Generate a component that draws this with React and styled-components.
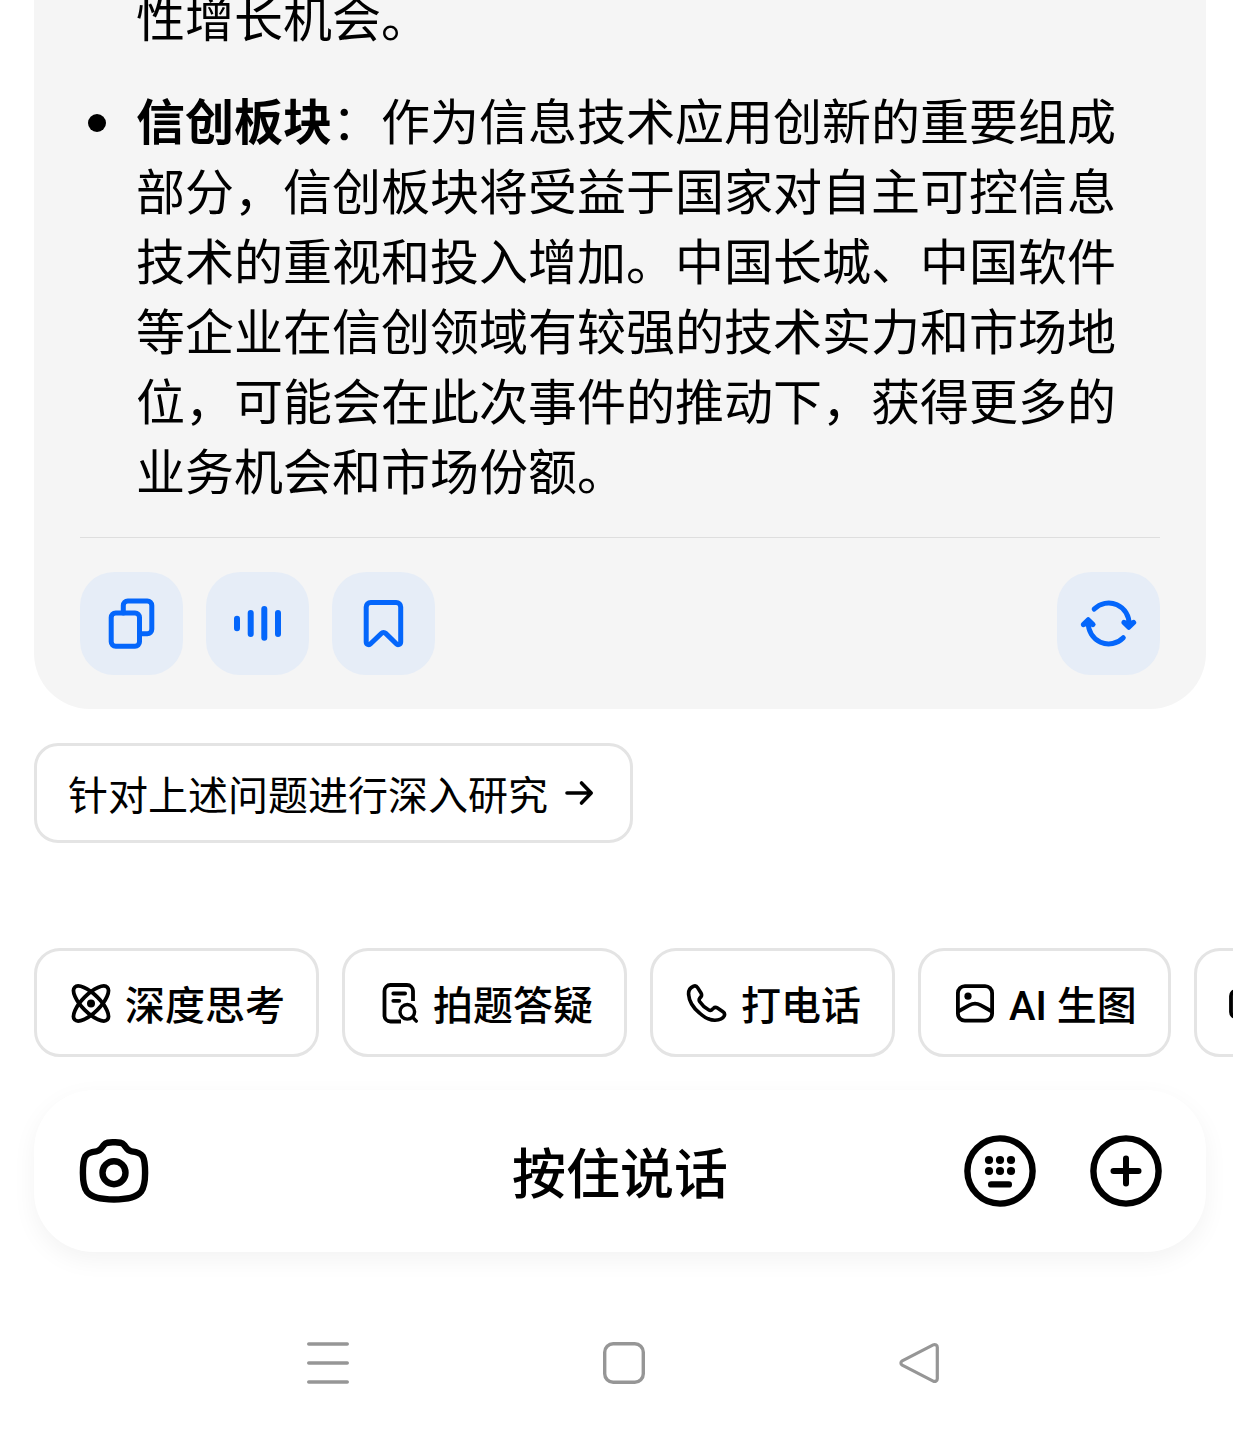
import styled, { createGlobalStyle } from 'styled-components';

const GlobalStyle = createGlobalStyle`
  * {
    box-sizing: border-box;
  }

  body {
    margin: 0;
    background: #fff;
    color: #000;
    font-family: Roboto, 'Noto Sans CJK SC', sans-serif;
    overflow-x: hidden;
  }

  button {
    font: inherit;
    color: inherit;
    cursor: pointer;
  }

  svg {
    display: block;
    flex: none;
  }
`;

const Page = styled.div`
  min-height: 100vh;
  overflow: hidden;
`;

const Main = styled.main`
  padding: 0 27px 0 34px;
`;

const Card = styled.article`
  margin-top: -14px;
  padding: 0 46px 34px;
  background: #f5f5f5;
  border-radius: 0 0 56px 56px;
`;

const List = styled.ul`
  list-style: none;
  margin: 0;
  padding: 0 40px 28px 56px;
  display: grid;
  gap: 33px;
`;

const Item = styled.li`
  position: relative;
  font-size: 49px;
  line-height: 70px;

  &::before {
    content: '';
    display: ${({ $continued }) => ($continued ? 'none' : 'block')};
    position: absolute;
    top: 25px;
    left: -48px;
    width: 18px;
    height: 18px;
    border-radius: 50%;
    background: #000;
  }
`;

const Actions = styled.div`
  display: flex;
  gap: 23px;
  padding-top: 34px;
  border-top: 1px solid #dedede;
`;

const ActionButton = styled.button`
  display: grid;
  place-items: center;
  width: 103px;
  height: 103px;
  padding: 0;
  border: 0;
  border-radius: 34px;
  background: #e6edf7;
  color: #0466fb;
  margin-left: ${({ $end }) => ($end ? 'auto' : '0')};
`;

const Label = styled.span`
  padding-top: 8px;
`;

const FollowUp = styled.button`
  display: flex;
  align-items: center;
  gap: 17px;
  height: 100px;
  margin-top: 34px;
  padding: 0 35px 0 31px;
  border: 3px solid #e4e4e4;
  border-radius: 24px;
  background: #fff;
  font-size: 40px;
  line-height: 48px;
  white-space: nowrap;
`;

const Chips = styled.div`
  display: flex;
  gap: 23px;
  margin-top: 105px;
  padding-left: 34px;
  overflow: hidden;
`;

const Chip = styled.button`
  flex: none;
  display: flex;
  align-items: center;
  gap: 11px;
  height: 109px;
  padding: 0 31px;
  border: 3px solid #e4e4e4;
  border-radius: 26px;
  background: #fff;
  font-size: 40px;
  font-weight: 500;
  line-height: 48px;
  white-space: nowrap;
`;

const Composer = styled.section`
  display: grid;
  grid-template-columns: 1fr auto 1fr;
  align-items: center;
  height: 162px;
  margin: 33px 27px 0 34px;
  padding: 0 44px;
  border-radius: 60px;
  background: #fff;
  box-shadow: 0 8px 24px rgba(0, 0, 0, 0.05);
`;

const IconButton = styled.button`
  display: grid;
  place-items: center;
  padding: 0;
  border: 0;
  background: none;
  color: ${({ $color }) => $color || '#000'};
`;

const Talk = styled.button`
  padding: 10px 0 0;
  border: 0;
  background: none;
  font-size: 54px;
  font-weight: 500;
  line-height: 72px;
`;

const Tools = styled.div`
  display: flex;
  gap: 54px;
  justify-self: ${({ $end }) => ($end ? 'end' : 'start')};
`;

const SystemNav = styled.nav`
  display: flex;
  justify-content: center;
  gap: 254px;
  padding: 90px 27px 56px 42px;
`;

function Icon({ size, stroke, viewBox, children }) {
  return (
    <svg
      width={size}
      height={size}
      viewBox={viewBox || `0 0 ${size} ${size}`}
      fill="none"
      stroke="currentColor"
      strokeWidth={stroke}
      strokeLinecap="round"
      strokeLinejoin="round"
      aria-hidden="true"
    >
      {children}
    </svg>
  );
}

const ActionIcon = ({ stroke = 5, children }) => (
  <Icon size={57} stroke={stroke} viewBox="-0.5 -0.5 57 57">
    {children}
  </Icon>
);

const CopyIcon = () => (
  <ActionIcon>
    <rect x="7.7" y="17.5" width="28.3" height="33.3" rx="4.5" />
    <path d="M19.8 17.5V9.9a4.5 4.5 0 0 1 4.5-4.5h19.5a4.5 4.5 0 0 1 4.5 4.5v23.9a4.5 4.5 0 0 1-4.5 4.5H36" />
  </ActionIcon>
);

const VoiceIcon = () => (
  <ActionIcon stroke={6}>
    <path d="M7.5 23.2v9.6M21.2 17.5v21M34.8 13.5v28.7M48.5 17.5v21" />
  </ActionIcon>
);

const BookmarkIcon = () => (
  <ActionIcon>
    <path d="M10.7 11.5A4.5 4.5 0 0 1 15.2 7h25.5a4.5 4.5 0 0 1 4.5 4.5v35c0 2.4-2.8 3.4-4.4 1.8L30.2 37.9c-1.2-1.2-3.2-1.2-4.4 0L15.1 48.3c-1.6 1.6-4.4.6-4.4-1.8z" />
  </ActionIcon>
);

const RefreshIcon = () => (
  <ActionIcon>
    <path d="M13.7 13.6A20.3 20.3 0 0 1 48.5 29" />
    <path d="M43.4 26.9l4.9 4.9 4.9-4.9-4.9 2z" fill="currentColor" />
    <path d="M42.8 42.2A20.3 20.3 0 0 1 7.9 27" />
    <path d="M2.8 29.1l4.9-4.9 4.9 4.9-4.9-2z" fill="currentColor" />
  </ActionIcon>
);

const ArrowIcon = () => (
  <Icon size={30} stroke={3.6}>
    <path d="M2 15h24M16.5 5l9.7 10-9.7 10" />
  </Icon>
);

const AtomIcon = () => (
  <Icon size={46} stroke={3.8}>
    <ellipse cx="23" cy="23.5" rx="23" ry="9" transform="rotate(45 23 23.5)" />
    <ellipse cx="23" cy="23.5" rx="23" ry="9" transform="rotate(-45 23 23.5)" />
    <circle cx="23" cy="23.5" r="4" fill="currentColor" stroke="none" />
  </Icon>
);

const PaperSearchIcon = () => (
  <Icon size={46} stroke={3.8}>
    <path d="M37 21V11a6 6 0 0 0-6-6H14.5a6 6 0 0 0-6 6v24.5a6 6 0 0 0 6 6H25" strokeLinecap="butt" />
    <path d="M17.3 13.5h11.8M17.3 20.8h6" />
    <circle cx="31.3" cy="31.8" r="7.3" strokeWidth="3.4" />
    <path d="M36.7 37.4l3.6 3.7" strokeWidth="3.4" />
  </Icon>
);

const PhoneIcon = () => (
  <Icon size={46} stroke={3.6}>
    <path d="M9.5 6.2C6 7.5 4.4 10.5 4.6 14.5 5.2 22 10 28.5 15.5 33c5 4.5 10.5 7.3 15.5 7.2 4-.1 7.8-1.4 9.2-4.2.8-1.8.3-3.2-1.2-4.2L33.500 28c-1.500-1-3-.8-4 .2l-1.700 1.600c-1 .8-2 .8-3.300 0-4-2.300-7-5.500-8.900-8.400-.7-1.200-.6-2.100.1-3.100l1.300-1.500c.8-1.300.8-2.500 0-3.800l-3.400-5.400c-1-1.600-2.400-2-4.100-1.400z" />
  </Icon>
);

const ImageIcon = () => (
  <Icon size={46} stroke={3.8}>
    <rect x="5.9" y="6.1" width="34.2" height="34.5" rx="7" />
    <path d="M6 31.5l11.500-6.300c3.500-1.900 7.500-1.900 11 0L40 31.500" />
    <circle cx="16" cy="16.2" r="3.6" fill="currentColor" stroke="none" />
  </Icon>
);

const VideoIcon = () => (
  <Icon size={46} stroke={3.8}>
    <rect x="3" y="11" width="28" height="26" rx="5" />
    <path d="M31 21l11-6v18l-11-6" />
  </Icon>
);

const CameraIcon = () => (
  <Icon size={72} stroke={6.4}>
    <path d="M36 7.3c4.5 0 7.8-.3 10.2 2.7 2 2.5 3 5.8 7.3 6.4 5 .6 9 1.400 11.300 5.100 1.700 3 2.300 9.500 2.300 16.500 0 8-.8 14.500-4.100 18.800-5 6.200-18 7.700-27 7.700s-22-1.500-27-7.700C5.700 52.500 4.900 46 4.900 38c0-7 .6-13.500 2.300-16.500 2.300-3.700 6.300-4.500 11.300-5.100 4.300-.6 5.300-3.900 7.300-6.400 2.400-3 5.700-2.700 10.200-2.700z" />
    <circle cx="36" cy="37.7" r="11.5" />
  </Icon>
);

const KeyboardIcon = () => (
  <Icon size={72} stroke={6.4}>
    <circle cx="36" cy="36" r="32.6" />
    <g fill="currentColor" stroke="none">
      {[25, 36].map((y) => [25, 36, 47].map((x) => <circle key={`${x}-${y}`} cx={x} cy={y} r="4.1" />))}
    </g>
    <path d="M27.2 49.4h17.6" />
  </Icon>
);

const PlusIcon = () => (
  <Icon size={72} stroke={6}>
    <circle cx="36" cy="36" r="32.6" strokeWidth="6.4" />
    <path d="M36 23.5v25M23.500 36h25" />
  </Icon>
);

const MenuIcon = () => (
  <Icon size={42} stroke={3.6}>
    <path d="M1.8 2h38.400M1.800 21h38.400M1.800 40h38.400" />
  </Icon>
);

const HomeIcon = () => (
  <Icon size={42} stroke={3.4}>
    <rect x="1.7" y="1.7" width="38.6" height="38.6" rx="8.5" />
  </Icon>
);

const BackIcon = () => (
  <Icon size={42} stroke={3.2}>
    <path d="M3.200 18.800L34.200 2.900c2-1 4.100.2 4.100 2.400v31.400c0 2.200-2.100 3.400-4.100 2.400L3.200 23.200c-1.700-.9-1.700-3.500 0-4.400z" />
  </Icon>
);

const chips = [
  { label: '深度思考', icon: AtomIcon },
  { label: '拍题答疑', icon: PaperSearchIcon },
  { label: '打电话', icon: PhoneIcon },
  { label: 'AI 生图', icon: ImageIcon },
];

export default function App() {
  return (
    <Page>
      <GlobalStyle />
      <Main>
        <Card>
          <List>
            <Item $continued>性增长机会。</Item>
            <Item>
              <strong>信创板块</strong>：作为信息技术应用创新的重要组成部分，信创板块将受益于国家对自主可控信息技术的重视和投入增加。中国长城、中国软件等企业在信创领域有较强的技术实力和市场地位，可能会在此次事件的推动下，获得更多的业务机会和市场份额。
            </Item>
          </List>
          <Actions>
            <ActionButton aria-label="复制"><CopyIcon /></ActionButton>
            <ActionButton aria-label="朗读"><VoiceIcon /></ActionButton>
            <ActionButton aria-label="收藏"><BookmarkIcon /></ActionButton>
            <ActionButton aria-label="重新生成" $end><RefreshIcon /></ActionButton>
          </Actions>
        </Card>
        <FollowUp>
          <Label>针对上述问题进行深入研究</Label>
          <ArrowIcon />
        </FollowUp>
      </Main>
      <Chips>
        {chips.map(({ label, icon: ChipIcon }) => (
          <Chip key={label}>
            <ChipIcon />
            <Label>{label}</Label>
          </Chip>
        ))}
        <Chip aria-label="视频"><VideoIcon /></Chip>
      </Chips>
      <Composer>
        <Tools>
          <IconButton aria-label="拍照"><CameraIcon /></IconButton>
        </Tools>
        <Talk>按住说话</Talk>
        <Tools $end>
          <IconButton aria-label="键盘"><KeyboardIcon /></IconButton>
          <IconButton aria-label="更多"><PlusIcon /></IconButton>
        </Tools>
      </Composer>
      <SystemNav>
        <IconButton $color="#969696" aria-label="最近任务"><MenuIcon /></IconButton>
        <IconButton $color="#969696" aria-label="主页"><HomeIcon /></IconButton>
        <IconButton $color="#969696" aria-label="返回"><BackIcon /></IconButton>
      </SystemNav>
    </Page>
  );
}
